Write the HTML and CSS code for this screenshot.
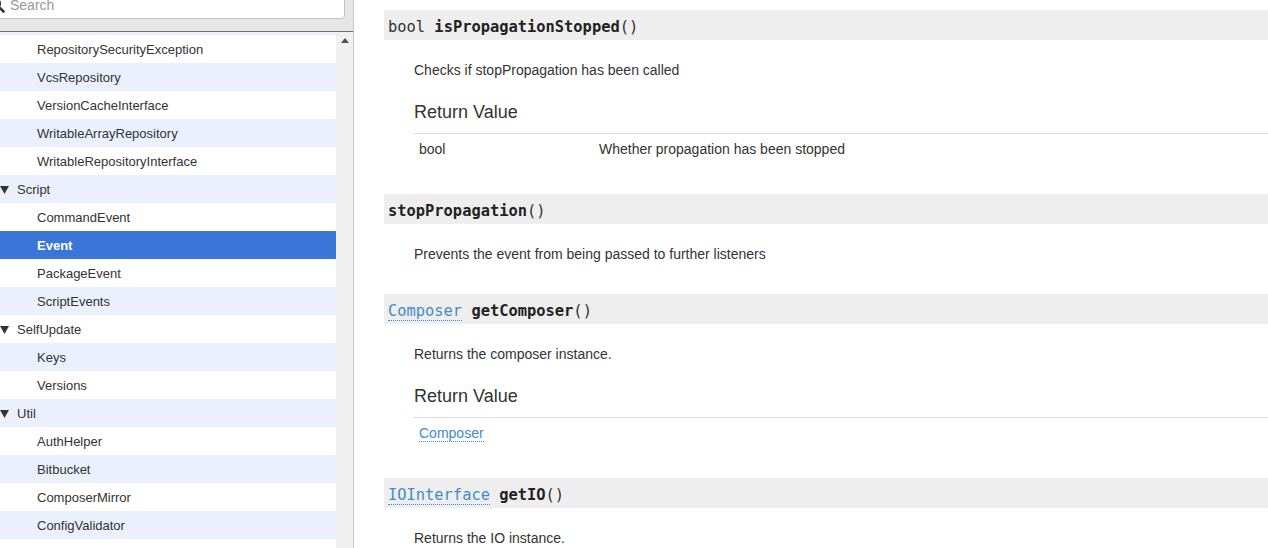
FILE: index.html
```html
<!DOCTYPE html>
<html>
<head>
<meta charset="utf-8">
<title>Event | Composer API</title>
<link rel="stylesheet" href="styles.css">
</head>
<body>
<div class="layout">
  <aside class="sidebar">
    <div class="search-bar">
      <div class="search-box">
        <svg class="search-icon" width="16" height="16" viewBox="0 0 16 16"><circle cx="6.5" cy="6.5" r="4.6" fill="none" stroke="#333" stroke-width="2"/><path d="M10 10 L14.5 14.5" stroke="#333" stroke-width="2.6" stroke-linecap="round"/></svg>
        <span class="search-placeholder">Search</span>
      </div>
    </div>
    <div class="tree-wrap">
      <ul class="tree">
        <li class="row alt child">RepositoryManager</li>
        <li class="row child">RepositorySecurityException</li>
        <li class="row alt child">VcsRepository</li>
        <li class="row child">VersionCacheInterface</li>
        <li class="row alt child">WritableArrayRepository</li>
        <li class="row child">WritableRepositoryInterface</li>
        <li class="row alt folder"><svg class="caret" width="9" height="8" viewBox="0 0 9 8"><path d="M0 0 H9 L4.5 8 Z" fill="#333"/></svg>Script</li>
        <li class="row child">CommandEvent</li>
        <li class="row child selected">Event</li>
        <li class="row child">PackageEvent</li>
        <li class="row alt child">ScriptEvents</li>
        <li class="row folder"><svg class="caret" width="9" height="8" viewBox="0 0 9 8"><path d="M0 0 H9 L4.5 8 Z" fill="#333"/></svg>SelfUpdate</li>
        <li class="row alt child">Keys</li>
        <li class="row child">Versions</li>
        <li class="row alt folder"><svg class="caret" width="9" height="8" viewBox="0 0 9 8"><path d="M0 0 H9 L4.5 8 Z" fill="#333"/></svg>Util</li>
        <li class="row child">AuthHelper</li>
        <li class="row alt child">Bitbucket</li>
        <li class="row child">ComposerMirror</li>
        <li class="row alt child">ConfigValidator</li>
        <li class="row child">ErrorHandler</li>
      </ul>
      <div class="scrollbar">
        <svg class="scroll-up" width="8" height="5" viewBox="0 0 8 5"><path d="M0 5 L4 0 L8 5 Z" fill="#505050"/></svg>
      </div>
    </div>
  </aside>
  <main class="content">
    <section class="method">
      <h3 class="method-head"><span class="type">bool</span> <strong>isPropagationStopped</strong>()</h3>
      <div class="method-body">
        <p class="desc">Checks if stopPropagation has been called</p>
        <h4 class="rv-title">Return Value</h4>
        <table class="rv-table">
          <tr><td class="rv-type">bool</td><td>Whether propagation has been stopped</td></tr>
        </table>
      </div>
    </section>
    <section class="method">
      <h3 class="method-head"><strong>stopPropagation</strong>()</h3>
      <div class="method-body">
        <p class="desc">Prevents the event from being passed to further listeners</p>
      </div>
    </section>
    <section class="method">
      <h3 class="method-head"><a class="link" href="#">Composer</a> <strong>getComposer</strong>()</h3>
      <div class="method-body">
        <p class="desc">Returns the composer instance.</p>
        <h4 class="rv-title">Return Value</h4>
        <table class="rv-table">
          <tr><td class="rv-type"><a class="link" href="#">Composer</a></td><td></td></tr>
        </table>
      </div>
    </section>
    <section class="method">
      <h3 class="method-head"><a class="link" href="#">IOInterface</a> <strong>getIO</strong>()</h3>
      <div class="method-body">
        <p class="desc">Returns the IO instance.</p>
      </div>
    </section>
  </main>
</div>
</body>
</html>
```
FILE: styles.css
```css
html, body {
  margin: 0;
  padding: 0;
  background: #fff;
}
body {
  font-family: "Liberation Sans", Arial, sans-serif;
  color: #333;
  overflow: hidden;
}
.layout {
  display: flex;
  height: 548px;
  overflow: hidden;
}
.sidebar {
  width: 353px;
  flex: 0 0 353px;
  border-right: 1px solid #c8c8c8;
  display: flex;
  flex-direction: column;
  background: #f0f0f0;
}
.search-bar {
  height: 31px;
  flex: 0 0 31px;
  background: #e6e6e6;
  border-bottom: 1px solid #6e6e6e;
  overflow: hidden;
  padding-right: 8px;
}
.search-box {
  margin-top: -14px;
  margin-left: -31px;
  height: 33px;
  background: #fff;
  border: 1px solid #c4c4c4;
  border-radius: 4px;
  display: flex;
  align-items: center;
  gap: 5px;
  padding-left: 19px;
  padding-top: 5px;
  box-sizing: border-box;
}
.search-icon {
  flex: 0 0 16px;
}
.search-placeholder {
  font-size: 14px;
  color: #999;
}
.tree-wrap {
  flex: 1;
  display: flex;
  overflow: hidden;
}
.tree {
  list-style: none;
  margin: -25px 0 0 0;
  padding: 0;
  flex: 1;
  background: #fff;
}
.row {
  height: 28px;
  line-height: 30px;
  font-size: 13px;
  color: #333;
  white-space: nowrap;
  box-sizing: border-box;
}
.row.alt {
  background: #eaf1fc;
}
.row.child {
  padding-left: 37px;
}
.row.folder {
  padding-left: 0;
  padding-top: 2px;
  display: flex;
  align-items: center;
  line-height: 28px;
}
.caret {
  margin: 0 8px 0 0;
}
.row.selected {
  background: #3a76d8;
  color: #fff;
  font-weight: bold;
}
.scrollbar {
  width: 17px;
  flex: 0 0 17px;
  background: #f0f0f0;
  display: flex;
  justify-content: center;
  padding-top: 6px;
  box-sizing: border-box;
}
.scroll-up {
  margin-left: 1px;
}
.content {
  flex: 1;
  min-width: 0;
  padding: 10px 0 0 30px;
  overflow: hidden;
}
.method {
  margin-bottom: 30px;
}
.method-head {
  margin: 0;
  height: 30px;
  line-height: 34px;
  background: #eee;
  padding-left: 4px;
  font-family: "DejaVu Sans Mono", "Liberation Mono", monospace;
  font-size: 15.4px;
  font-weight: normal;
  color: #333;
  white-space: nowrap;
}
.method-head strong {
  font-weight: bold;
  color: #222;
}
.link {
  color: #428bca;
  text-decoration: none;
  border-bottom: 1px dotted #428bca;
}
.method-body {
  padding-left: 30px;
}
.desc {
  margin: 20px 0 0;
  font-size: 14px;
  line-height: 20px;
}
.rv-title {
  margin: 22px 0 11px;
  font-size: 18px;
  line-height: 20px;
  font-weight: normal;
  color: #333;
}
.rv-table {
  width: 100%;
  border-collapse: collapse;
  border-top: 1px solid #ddd;
  font-size: 14px;
}
.rv-table td {
  padding: 5px;
  line-height: 20px;
  vertical-align: top;
}
.rv-type {
  width: 170px;
}
```
